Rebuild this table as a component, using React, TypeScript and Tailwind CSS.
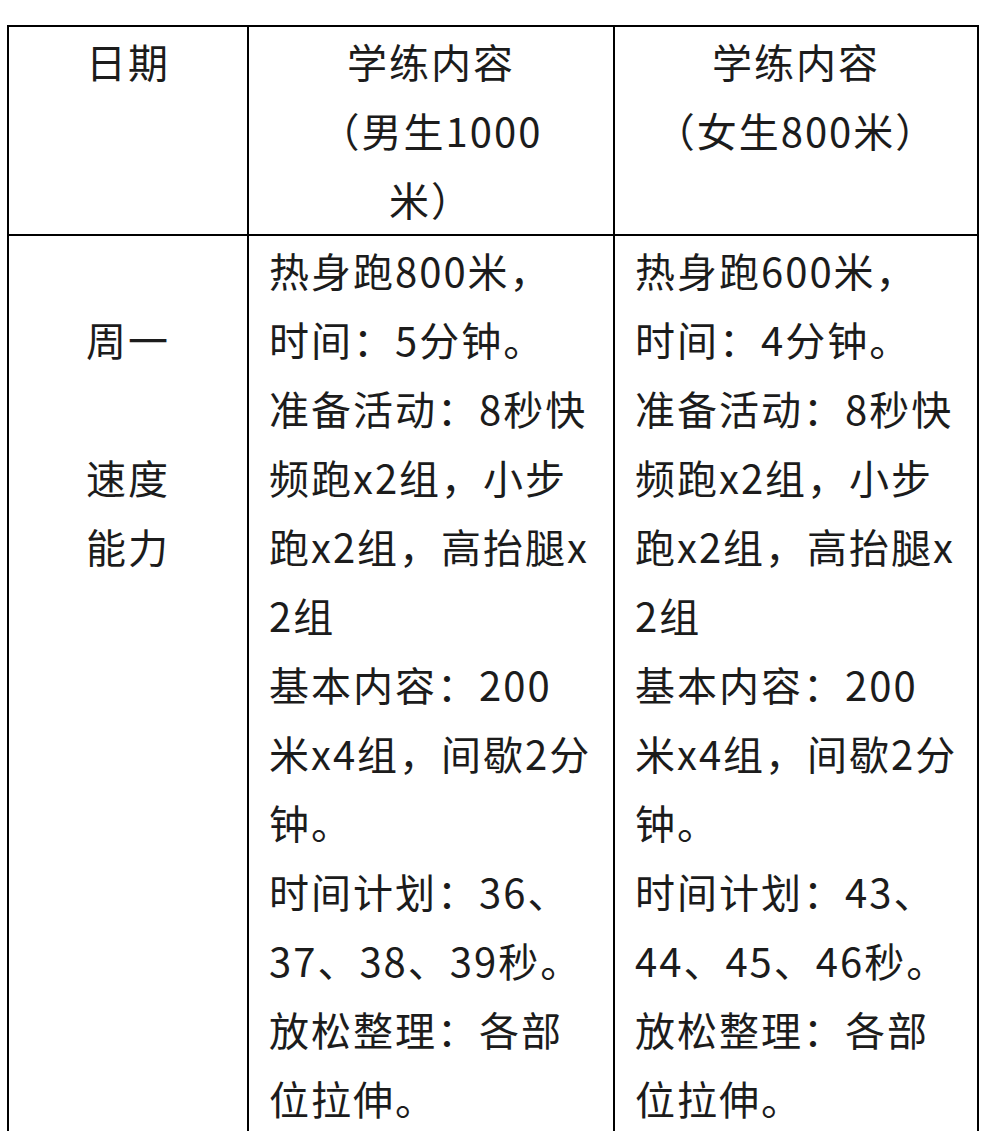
import React from "react";

const font = {
  fontFamily: '"Noto Sans CJK SC", "Noto Sans", sans-serif',
};

function Lines({ lines, center }: { lines: string[]; center?: boolean }) {
  return (
    <div className={center ? "text-center" : "text-left"}>
      {lines.map((l, i) => (
        <div key={i} className="h-[69px] leading-[69px] whitespace-nowrap">
          {l === "" ? "\u00a0" : l}
        </div>
      ))}
    </div>
  );
}

const boys = [
  "热身跑800米，",
  "时间：5分钟。",
  "准备活动：8秒快",
  "频跑x2组，小步",
  "跑x2组，高抬腿x",
  "2组",
  "基本内容：200",
  "米x4组，间歇2分",
  "钟。",
  "时间计划：36、",
  "37、38、39秒。",
  "放松整理：各部",
  "位拉伸。",
];

const girls = [
  "热身跑600米，",
  "时间：4分钟。",
  "准备活动：8秒快",
  "频跑x2组，小步",
  "跑x2组，高抬腿x",
  "2组",
  "基本内容：200",
  "米x4组，间歇2分",
  "钟。",
  "时间计划：43、",
  "44、45、46秒。",
  "放松整理：各部",
  "位拉伸。",
];

export default function App() {
  return (
    <div
      className="min-h-screen bg-white pt-[25px] pl-[7px] text-[40px] tracking-[2px] text-[#1c1c1c]"
      style={font}
    >
      <div className="w-[972px] border-2 border-black">
        <div className="flex border-b-2 border-black">
          <div className="w-[240px] shrink-0 border-r-2 border-black">
            <Lines center lines={["日期", "", ""]} />
          </div>
          <div className="w-[366px] shrink-0 border-r-2 border-black">
            <Lines center lines={["学练内容", "（男生1000", "米）"]} />
          </div>
          <div className="flex-1">
            <Lines center lines={["学练内容", "（女生800米）", ""]} />
          </div>
        </div>
        <div className="flex pb-[40px]">
          <div className="w-[240px] shrink-0 border-r-2 border-black">
            <Lines center lines={["", "周一", "", "速度", "能力"]} />
          </div>
          <div className="w-[366px] shrink-0 border-r-2 border-black px-[20px]">
            <Lines lines={boys} />
          </div>
          <div className="flex-1 px-[20px]">
            <Lines lines={girls} />
          </div>
        </div>
      </div>
    </div>
  );
}
